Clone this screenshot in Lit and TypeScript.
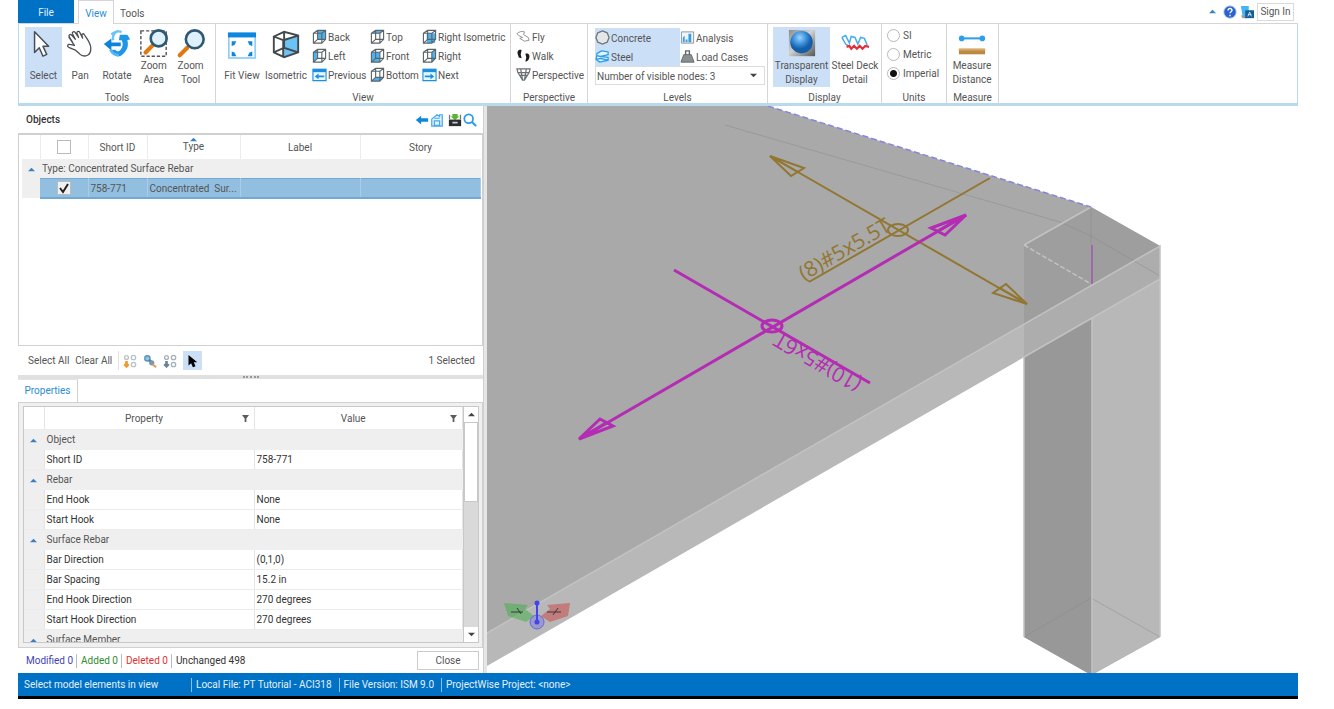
import { LitElement, html, svg, css, nothing, type TemplateResult } from "lit";
import { customElement, property, state } from "lit/decorators.js";
import { classMap } from "lit/directives/class-map.js";

/* ---------- icons ---------- */

const cubeEdges = svg`<path d="M1.500 4.500 6 1.500h8.500v9.500l-4 4H1.500zM1.500 4.500h9v10.500M10.500 4.500l4-3M6 1.500v9.500M6 11h8.500M1.500 15 6 11" fill="none" stroke="#5d6468" stroke-width="1.200"/>`;

const cubeFace: Record<string, string> = {
  back: "M6 1.500h8.500V11H6z",
  left: "M1.500 4.500 6 1.500V11l-4.500 4z",
  top: "M1.500 4.500 6 1.500h8.500l-4 3z",
  front: "M1.500 4.500h9V15h-9z",
  bottom: "M1.500 15 6 11h8.500l-4 4z",
  right: "M10.500 4.500l4-3V11l-4 4z",
};

function cube(face: string) {
  return html`<svg viewBox="0 0 16 16" aria-hidden="true">
    <path d=${cubeFace[face]} fill="#4bb4f2" />${cubeEdges}
  </svg>`;
}

const icons: Record<string, TemplateResult> = {
  select: html`<svg viewBox="0 0 32 32" aria-hidden="true"><path d="M7 3v22l5-5 4 9 4-2-4-8.500h6z" fill="#fff" stroke="#4a4f55" stroke-width="1.600" stroke-linejoin="round"/></svg>`,
  pan: html`<svg viewBox="0 0 32 32" aria-hidden="true"><path d="M8 14 4.500 8.500c-1-2 1.200-3.600 2.600-1.900L11 11 8 5c-.8-2 1.700-3 2.800-1.300L14.500 9l-1.700-4.500c-.5-2 2.100-2.700 3-.8l3 6-.8-3c-.3-1.800 1.800-2.300 2.700-.6 2.300 4 6.500 8.500 6.800 13.900.2 4-.5 6.500-3.500 8-3 1.400-6 1-8.500-1.500l-4.500-4-7-3c-2.300-1.200-1-3.700 1.200-3l4.800 1-6-9" fill="#fff" stroke="#4a4f55" stroke-width="1.400" stroke-linejoin="round"/></svg>`,
  rotate: html`<svg viewBox="0 0 32 32" aria-hidden="true"><path d="M17 2c-4 2-6 6-5 10M10 6c3-3 7-4 11-3" fill="none" stroke="#6cc3f7" stroke-width="2.500"/><path d="M10 10 2 16l8 7v-4.500h10v-4H10z" fill="#0c84dc"/><path d="M19 6h8l3 5-3 1c2 7-1 12-6 16-3 2-7 1-10-3l-2-3h5c2 2 4 2 5 1 3-3 4-7 2-11h-3z" fill="#1f97e8"/><path d="M9 22c2 4 5 6 9 6" fill="none" stroke="#52b7f5" stroke-width="3"/></svg>`,
  zoomArea: html`<svg viewBox="0 0 32 32" aria-hidden="true"><path d="M2 2h27v27H2z" fill="none" stroke="#50545a" stroke-width="1.500" stroke-dasharray="3.500 2"/><path d="m14 18-7 7" stroke="#e0790f" stroke-width="4.500" stroke-linecap="round"/><circle cx="21" cy="10" r="8.500" fill="#dff1fc" stroke="#2f5872" stroke-width="2.800"/></svg>`,
  zoomTool: html`<svg viewBox="0 0 32 32" aria-hidden="true"><path d="m12 20-8 8" stroke="#e0790f" stroke-width="4.500" stroke-linecap="round"/><circle cx="20" cy="11" r="9.500" fill="#dff1fc" stroke="#2f5872" stroke-width="2.800"/></svg>`,
  fit: html`<svg viewBox="0 0 32 32" aria-hidden="true"><path d="M2 4h28v27H2z" fill="#fff" stroke="#7cc6f5" stroke-width="1.500"/><path d="M1 4h30v5H1z" fill="#0f86de"/><path d="M5 13h5l-2 4-3 1zM27 13v5l-3-1-2-4zM5 29v-5l3 1 2 4zM27 29h-5l2-4 3-1z" fill="#0f86de"/></svg>`,
  isometric: html`<svg viewBox="0 0 32 32" aria-hidden="true"><path d="M13 11l16-3v17l-16 5z" fill="#6cc3f5"/><path d="M3 8 14 3l15 4v18l-15 5L3 25zM3 8l10 4v18M13 12l16-5M14 3v17M3 25l11-5 15 5" fill="none" stroke="#43484c" stroke-width="2"/></svg>`,
  prev: html`<svg viewBox="0 0 16 16" aria-hidden="true"><path d="M1 2.500h14v12H1z" fill="#e8f6fe" stroke="#1b8fe4" stroke-width="1.200"/><path d="M1 2h14v3.500H1z" fill="#1b8fe4"/><path d="M3 10l4-3v2h6v2H7v2z" fill="#1b8fe4"/></svg>`,
  next: html`<svg viewBox="0 0 16 16" aria-hidden="true"><path d="M1 2.500h14v12H1z" fill="#e8f6fe" stroke="#1b8fe4" stroke-width="1.200"/><path d="M1 2h14v3.500H1z" fill="#1b8fe4"/><path d="M13 10 9 7v2H3v2h6v2z" fill="#1b8fe4"/></svg>`,
  fly: html`<svg viewBox="0 0 16 16" aria-hidden="true"><path d="M1 5c2-2 5-3 8-2l-1 3 5 3 1 3-5 1-5-3 3-1-4-2z" fill="#fff" stroke="#8b9094"/></svg>`,
  walk: html`<svg viewBox="0 0 16 16" aria-hidden="true"><path d="M6 2C2 1 1 4 2 7l1 3 3 1-1-4z" fill="#1b1b1b"/><path d="M10 6c4-1 5 2 4 5s-3 4-4 3l1-4z" fill="#1b1b1b"/></svg>`,
  perspective: html`<svg viewBox="0 0 16 16" aria-hidden="true"><path d="M1 2h14l-1 4-5 8H7L2 6zM5 2l2 12M11 2 9 14M2 6h12M4 9h8" fill="none" stroke="#6b7075" stroke-width="1.300"/></svg>`,
  concrete: html`<svg viewBox="0 0 16 16" aria-hidden="true"><path d="M8 1l5 2 2 5-2 5-5 2-5-2-2-5 2-5z" fill="#e4e6e8" stroke="#70767b" stroke-width="1.400"/></svg>`,
  steel: html`<svg viewBox="0 0 16 16" aria-hidden="true"><path d="M14 3 7 2 2 5v2l4 1 8-2zM2 7l-1 4 4 3 9-2V9L6 8M1 11l5-1 8 2" fill="#e4f4fe" stroke="#2f9fe8" stroke-width="1.400" stroke-linejoin="round"/></svg>`,
  analysis: html`<svg viewBox="0 0 16 16" aria-hidden="true"><path d="M1.500 2h13v12h-13z" fill="#eef6fb" stroke="#8b9298"/><path d="M3 13V8l2-2v7zM6 13v-3h2v3zM9 13V4h3v9z" fill="#3a9be0"/></svg>`,
  load: html`<svg viewBox="0 0 16 16" aria-hidden="true"><path d="M4 6h8l3 8H1z" fill="#8a8f93" stroke="#60666a"/><path d="M6 6V2h4v4" fill="none" stroke="#60666a" stroke-width="1.500"/></svg>`,
  transparent: html`<svg viewBox="0 0 32 32" aria-hidden="true"><defs><linearGradient id="plate" x2="1" y2="1"><stop stop-color="#8c8c8c"/><stop offset=".45" stop-color="#d2d2d2"/><stop offset="1" stop-color="#555"/></linearGradient><radialGradient id="ball" cx=".42" cy=".3"><stop stop-color="#9fd4fb"/><stop offset=".6" stop-color="#3a8fdb"/><stop offset="1" stop-color="#155fa8"/></radialGradient></defs><path d="M2 1h28v28H2z" fill="url(#plate)"/><circle cx="15.500" cy="14" r="12" fill="url(#ball)"/></svg>`,
  deck: html`<svg viewBox="0 0 32 32" aria-hidden="true"><path d="M2 9l4-2 4 8 2-7 4 1 3 7 3-7 4 1 3 7M2 9l4 7 3 2" fill="none" stroke="#45abec" stroke-width="1.600"/><path d="M7 19l3-1 2 3 3-3 3 3 3-3 3 3 3-3 4 1" fill="none" stroke="#e0303a" stroke-width="2.400"/></svg>`,
  measure: html`<svg viewBox="0 0 32 32" aria-hidden="true"><path d="M4 10h24" stroke="#2f9fe8" stroke-width="2.200"/><circle cx="5" cy="10" r="3" fill="#2f9fe8"/><circle cx="27" cy="10" r="3" fill="#2f9fe8"/><path d="M2 21h28v6H2z" fill="#bb8844"/><path d="M2 21h28v2H2z" fill="#d5aa66"/></svg>`,
  help: html`<svg viewBox="0 0 16 16" aria-hidden="true"><circle cx="8" cy="8" r="7" fill="#2b62cc" stroke="#9db8e8"/><path d="M5.800 6.300c0-3 4.500-3 4.500-.3 0 1.700-2.200 1.600-2.200 3.500M8 11v1.800" fill="none" stroke="#fff" stroke-width="1.600"/></svg>`,
  bentley: html`<svg viewBox="0 0 16 16" aria-hidden="true"><path d="M1 1h9v12H3z" fill="#45b5f0"/><path d="M1 12h7v3H3z" fill="#9a9a9a"/><path d="M6 6h10v9H6z" fill="#115f98"/><path d="M9 13l2-5 2 5M9 11h4" stroke="#d6ecfa" fill="none"/></svg>`,
  back: html`<svg viewBox="0 0 16 16" aria-hidden="true"><path d="M1 8l6-5v3h8v4H7v3z" fill="#0f86de"/></svg>`,
  home: html`<svg viewBox="0 0 16 16" aria-hidden="true"><path d="M2 7l6-5 3 2V2h3v13H2zM5 9h6v5H5zM5 6h6" fill="#e3f3fd" stroke="#45a9ea" stroke-width="1.400"/></svg>`,
  drawer: html`<svg viewBox="0 0 16 16" aria-hidden="true"><path d="M1 2h1.500v5H1zM13.500 2H15v5h-1.500z" fill="#777"/><path d="M5 1h6v3h2L8 8 3 4h2z" fill="#58b52c"/><path d="M1 7.500h14V15H1z" fill="#2a2e31"/><path d="M5 10h6v2H5z" fill="#c6cacc"/></svg>`,
  search: html`<svg viewBox="0 0 16 16" aria-hidden="true"><circle cx="6.500" cy="6.500" r="5" fill="none" stroke="#2b9be8" stroke-width="2"/><path d="m10 10 5 5" stroke="#2b9be8" stroke-width="2.400"/></svg>`,
  pickAdd: html`<svg viewBox="0 0 16 16" aria-hidden="true"><path d="M4 8v5M1.500 11.500 4 14l2.500-2.500" fill="none" stroke="#f09a28" stroke-width="3"/><circle cx="4" cy="4" r="2.200" fill="none" stroke="#b8c3c9" stroke-width="1.500"/><circle cx="12" cy="4" r="2.500" fill="none" stroke="#b8c3c9" stroke-width="1.500"/><circle cx="12" cy="12" r="2.500" fill="none" stroke="#b8c3c9" stroke-width="1.500"/></svg>`,
  pickFind: html`<svg viewBox="0 0 16 16" aria-hidden="true"><circle cx="5" cy="5" r="3" fill="#8cc7ea" stroke="#5a92b4" stroke-width="1.500"/><path d="m7 7 4 3" stroke="#567c92" stroke-width="3"/><circle cx="10" cy="10" r="3" fill="#7e99a8"/><path d="m11 12 4 3" stroke="#dda04c" stroke-width="2.200"/></svg>`,
  pickDrop: html`<svg viewBox="0 0 16 16" aria-hidden="true"><path d="M4 8v5M1.500 11.500 4 14l2.500-2.500" fill="none" stroke="#6c8494" stroke-width="3"/><circle cx="4" cy="4" r="2.200" fill="none" stroke="#a5b1b8" stroke-width="1.500"/><circle cx="12" cy="4" r="2.500" fill="none" stroke="#a5b1b8" stroke-width="1.500"/><circle cx="12" cy="12" r="2.500" fill="none" stroke="#a5b1b8" stroke-width="1.500"/></svg>`,
  pointer: html`<svg viewBox="0 0 16 16" aria-hidden="true"><path d="M4 1v12l3-2.500L9 15l3-1-2-4.500h4z" fill="#000"/></svg>`,
  filter: html`<svg viewBox="0 0 8 8" aria-hidden="true"><path d="M0 0h8L5 4v4H3V4z" fill="#5c5c5c"/></svg>`,
  up: html`<svg viewBox="0 0 8 8" aria-hidden="true"><path d="M0 6l4-4 4 4z" fill="#3c7fbf"/></svg>`,
  scrollUp: html`<svg viewBox="0 0 8 8" aria-hidden="true"><path d="M0 6l4-4 4 4z" fill="#444"/></svg>`,
  scrollDown: html`<svg viewBox="0 0 8 8" aria-hidden="true"><path d="M0 2l4 4 4-4z" fill="#444"/></svg>`,
};

for (const face of Object.keys(cubeFace)) icons["cube-" + face] = cube(face);
icons["cube-iso"] = html`<svg viewBox="0 0 16 16" aria-hidden="true"><path d="M5 4.500h9V15H5z" fill="#4bb4f2"/>${cubeEdges}</svg>`;

const controlReset = css`
  *, *::before, *::after { box-sizing: border-box; }
  button, select, input { font: inherit; color: inherit; margin: 0; }
  button { border: 0; background: none; padding: 0; white-space: nowrap; }
  svg { display: block; }
`;

/* ---------- ribbon ---------- */

@customElement("ribbon-bar")
export class RibbonBar extends LitElement {
  @state() private units = "Imperial";

  static styles = [controlReset, css`
    :host { display: block; color: #555; }
    .tabs { display: flex; align-items: stretch; height: 24px; border-bottom: 1px solid #d5d5d5; }
    .file { width: 56px; padding-top: 2px; background: #0072c6; color: #e4f0fa; }
    .tab { padding: 3px 6px 0; height: 24px; }
    .tab.active { margin-left: 4px; width: 36px; padding: 2px 0 0; color: #2a8dd4; background: #fff; border: 1px solid #d5d5d5; border-bottom: 0; }
    .account { margin-left: auto; display: flex; align-items: center; gap: 3px; padding-right: 4px; }
    .account svg { width: 14px; height: 14px; }
    .account .fold svg { width: 7px; height: 7px; margin-right: 4px; }
    .signin { border: 1px solid #dadada; height: 18px; width: 37px; }
    .groups { display: flex; height: 82px; border: 1px solid #b9d9ee; border-top: 0; border-bottom-width: 3px; }
    .group { display: flex; flex-direction: column; flex: none; border-right: 1px solid #d5d5d5; }
    .body { display: flex; height: 64px; padding: 3px 6px 0; }
    .caption { text-align: center; line-height: 20px; height: 15px; }
    .big { display: flex; flex-direction: column; align-items: center; width: 38px; height: 60px; line-height: 14px; white-space: normal; }
    .big svg { width: 30px; height: 30px; margin-top: 2px; flex: none; }
    .big .text { height: 28px; display: flex; align-items: center; text-align: center; }
    .big .single { padding-top: 6px; white-space: nowrap; }
    .wide { width: 44px; }
    .display { width: 57px; }
    .deck { width: 50px; }
    .on { background: #cbe0f7; }
    .stack { display: grid; grid-auto-rows: 19px; grid-auto-flow: column; grid-template-rows: repeat(3, 19px); align-content: start; }
    .small { display: flex; align-items: center; gap: 1px; height: 19px; text-align: left; }
    .small span { padding-top: 2px; }
    .small svg { width: 15px; height: 15px; flex: none; }
    .tools { width: 197px; }
    .view { width: 295px; }
    .view .body { padding: 3px 4px 0; }
    .view .stack { grid-template-columns: 58px 52px auto; margin-left: 4px; }
    .walk { width: 77px; }
    .walk .body { padding: 3px 5px 0; }
    .levels { width: 180px; }
    .levels .body { flex-direction: column; padding: 4px 2px 0 7px; }
    .pairs { display: grid; grid-template-columns: 85px auto; grid-auto-rows: 19px; }
    .combo { position: relative; display: block; height: 19px; }
    .combo select { width: 100%; height: 19px; appearance: none; background: #fff; border: 1px solid #dcdcdc; padding: 2px 1px 0; }
    .combo svg { position: absolute; right: 8px; top: 6px; width: 7px; height: 7px; pointer-events: none; }
    .show { width: 114px; }
    .show .body { padding: 3px 1px 0 5px; }
    .unit { display: flex; align-items: center; gap: 3px; height: 19px; }
    .unit input { appearance: none; width: 13px; height: 13px; border: 1px solid #b8b8b8; border-radius: 50%; background: #fff; }
    .unit input:checked { background: radial-gradient(circle, #111 0 3px, #fff 4px); }
    .units { width: 65px; }
    .units .body { display: block; padding: 2px 5px; }
    .measure { width: 52px; }
    .measure .body { padding: 3px 3px 0; }
  `];

  private big(icon: string, label: string, extra = "", single = false) {
    return html`<button class="big ${extra}">${icons[icon]}<span class=${classMap({ text: true, single })}>${label}</span></button>`;
  }

  private small(icon: string, label: string, on = false) {
    return html`<button class=${classMap({ small: true, on })}>${icons[icon]}<span>${label}</span></button>`;
  }

  render() {
    return html`
      <nav class="tabs">
        <button class="file">File</button>
        <button class="tab active">View</button>
        <button class="tab">Tools</button>
        <div class="account">
          <button class="fold" aria-label="Collapse ribbon">${icons.up}</button>
          <button aria-label="Help">${icons.help}</button>
          <button aria-label="Connect">${icons.bentley}</button>
          <button class="signin">Sign In</button>
        </div>
      </nav>
      <div class="groups">
        <section class="group tools">
          <div class="body">
            ${this.big("select", "Select", "on", true)}
            ${this.big("pan", "Pan", "", true)}
            ${this.big("rotate", "Rotate", "", true)}
            ${this.big("zoomArea", "Zoom Area")}
            ${this.big("zoomTool", "Zoom Tool")}
          </div>
          <div class="caption">Tools</div>
        </section>
        <section class="group view">
          <div class="body">
            ${this.big("fit", "Fit View", "wide", true)}
            ${this.big("isometric", "Isometric", "wide", true)}
            <div class="stack">
              ${this.small("cube-back", "Back")}${this.small("cube-left", "Left")}${this.small("prev", "Previous")}
              ${this.small("cube-top", "Top")}${this.small("cube-front", "Front")}${this.small("cube-bottom", "Bottom")}
              ${this.small("cube-iso", "Right Isometric")}${this.small("cube-right", "Right")}${this.small("next", "Next")}
            </div>
          </div>
          <div class="caption">View</div>
        </section>
        <section class="group walk">
          <div class="body">
            <div class="stack">
              ${this.small("fly", "Fly")}${this.small("walk", "Walk")}${this.small("perspective", "Perspective")}
            </div>
          </div>
          <div class="caption">Perspective</div>
        </section>
        <section class="group levels">
          <div class="body">
            <div class="pairs">
              ${this.small("concrete", "Concrete", true)}${this.small("analysis", "Analysis")}
              ${this.small("steel", "Steel", true)}${this.small("load", "Load Cases")}
            </div>
            <label class="combo">
              <select aria-label="Visible nodes"><option>Number of visible nodes: 3</option></select>
              ${icons.scrollDown}
            </label>
          </div>
          <div class="caption">Levels</div>
        </section>
        <section class="group show">
          <div class="body">
            ${this.big("transparent", "Transparent Display", "display on")}
            ${this.big("deck", "Steel Deck Detail", "deck")}
          </div>
          <div class="caption">Display</div>
        </section>
        <section class="group units">
          <div class="body">
            ${["SI", "Metric", "Imperial"].map((u) => html`
              <label class="unit"><input type="radio" name="units" .checked=${this.units === u} @change=${() => (this.units = u)} />${u}</label>`)}
          </div>
          <div class="caption">Units</div>
        </section>
        <section class="group measure">
          <div class="body">${this.big("measure", "Measure Distance", "wide")}</div>
          <div class="caption">Measure</div>
        </section>
      </div>`;
  }
}

/* ---------- objects list ---------- */

@customElement("objects-panel")
export class ObjectsPanel extends LitElement {
  static styles = [controlReset, css`
    :host { display: flex; flex-direction: column; color: #555; }
    .title { display: flex; align-items: center; height: 27px; padding: 0 6px 0 8px; }
    h2 { font-size: 10px; font-weight: 500; margin: 0 auto 0 0; color: #333; }
    .title button { margin-left: 1px; }
    .title svg { width: 14px; height: 14px; }
    .title .apart { margin-left: 4px; }
    .frame { flex: 1; border: 1px solid #d0d0d0; border-top-width: 2px; padding: 0 1px 0 3px; }
    table { width: 100%; border-collapse: collapse; table-layout: fixed; }
    th, td { padding: 2px 2px 0; font-weight: 400; white-space: nowrap; overflow: hidden; text-overflow: ellipsis; }
    th { height: 24px; border-right: 1px solid #ececec; }
    th:last-child { border-right: 0; }
    td { height: 20px; }
    .group td { background: #efefef; height: 19px; }
    .group td svg, .sort svg { width: 7px; height: 7px; margin: auto; }
    .picked td { background: #92bfe0; border-top: 1px solid #6fa9d6; border-bottom: 2px solid #6fa9d6; border-right: 1px solid #a9cde8; }
    .picked td:first-child { background: #efefef; border: 0; }
    td.center { text-align: center; padding-top: 0; }
    .sort { line-height: 12px; padding-bottom: 5px; }
    .sort svg { margin-bottom: -2px; }
    input { display: block; margin: 0 auto; appearance: none; width: 14px; height: 14px; border: 1px solid #bbb; background: #fff; }
    input:checked { background: #f0f0f0 url("data:image/svg+xml,%3Csvg xmlns='http://www.w3.org/2000/svg' viewBox='0 0 12 12'%3E%3Cpath d='M2 6l3 4 5-8' fill='none' stroke='%23222' stroke-width='2'/%3E%3C/svg%3E"); }
    .indent { width: 18px; }
    .check { width: 48px; padding-top: 0; }
    .id { width: 59px; }
    .type { width: 93px; padding-top: 0; }
    .label { width: 120px; }
    .tools { display: flex; align-items: center; height: 29px; padding: 0 8px 0 10px; }
    .tools button + button { margin-left: 6px; }
    .tools svg { width: 14px; height: 14px; }
    .tools .sep { border-left: 1px solid #e2e2e2; padding-left: 4px; height: 19px; }
    .tools .on { background: #cbe0f7; width: 19px; height: 19px; padding: 0 2px; }
    .count { margin-left: auto; }
  `];

  render() {
    return html`
      <header class="title">
        <h2>Objects</h2>
        <button aria-label="Back">${icons.back}</button>
        <button aria-label="Home">${icons.home}</button>
        <button class="apart" aria-label="Saved sets">${icons.drawer}</button>
        <button aria-label="Search">${icons.search}</button>
      </header>
      <div class="frame">
        <table>
          <thead>
            <tr>
              <th class="indent"></th>
              <th class="check"><input type="checkbox" aria-label="Select all rows" /></th>
              <th class="id">Short ID</th>
              <th class="type"><div class="sort">${icons.up}Type</div></th>
              <th class="label">Label</th>
              <th>Story</th>
            </tr>
          </thead>
          <tbody>
            <tr class="group"><td>${icons.up}</td><td colspan="5">Type: Concentrated Surface Rebar</td></tr>
            <tr class="picked">
              <td></td>
              <td class="center"><input type="checkbox" aria-label="758-771" checked /></td>
              <td>758-771</td><td>Concentrated &nbsp;Sur...</td><td></td><td></td>
            </tr>
          </tbody>
        </table>
      </div>
      <footer class="tools">
        <button>Select All</button>
        <button>Clear All</button>
        <button class="sep" aria-label="Add to selection">${icons.pickAdd}</button>
        <button aria-label="Find selection">${icons.pickFind}</button>
        <button aria-label="Remove from selection">${icons.pickDrop}</button>
        <button class="on" aria-label="Pick in view">${icons.pointer}</button>
        <span class="count">1 Selected</span>
      </footer>`;
  }
}

/* ---------- properties grid ---------- */

type Row = [string, string?];
const rows: Row[] = [
  ["Object"], ["Short ID", "758-771"],
  ["Rebar"], ["End Hook", "None"], ["Start Hook", "None"],
  ["Surface Rebar"], ["Bar Direction", "(0,1,0)"], ["Bar Spacing", "15.2 in"],
  ["End Hook Direction", "270 degrees"], ["Start Hook Direction", "270 degrees"],
  ["Surface Member"],
];

@customElement("properties-panel")
export class PropertiesPanel extends LitElement {
  static styles = [controlReset, css`
    :host { display: flex; flex-direction: column; color: #333; min-height: 0; }
    .tab { width: 60px; height: 23px; color: #2a8dd4; background: #fff; border-right: 1px solid #d0d0d0; border-top: 1px solid #e4e4e4; }
    .frame { flex: 1; min-height: 0; display: flex; background: #f0f0f0; border: 1px solid #d0d0d0; padding: 3px 3px 4px 4px; }
    .clip { flex: 1; overflow: hidden; border: 1px solid #c8c8c8; border-right: 0; background: #fff; }
    table { width: 100%; border-collapse: collapse; table-layout: fixed; }
    th, td { height: 20px; padding: 2px 2px 0; font-weight: 400; text-align: left; border-bottom: 1px solid #ececec; border-right: 1px solid #e4e4e4; white-space: nowrap; }
    th { height: 22px; color: #555; }
    .head { display: flex; align-items: center; padding-right: 3px; }
    .head span { flex: 1; text-align: center; }
    .head svg { width: 7px; height: 7px; }
    .indent { width: 20px; background: #efefef; }
    th.indent { background: #fff; }
    .indent svg { width: 7px; height: 7px; margin: auto; }
    .group td { background: #efefef; border-color: #efefef; color: #555; }
    .name { width: 210px; }
    .bar { width: 16px; display: flex; flex-direction: column; background: #d9d9d9; border: 1px solid #c8c8c8; }
    .bar button { height: 15px; display: grid; place-items: center; background: #fff; }
    .bar svg { width: 7px; height: 7px; }
    .thumb { height: 80px; background: #fff; border: 1px solid #c8c8c8; margin-bottom: auto; }
    .foot { display: flex; align-items: center; height: 25px; padding: 0 4px 0 8px; }
    .foot span + span { border-left: 1px solid #bbb; margin-left: 3px; padding-left: 4px; }
    .modified { color: #3f3fb8; }
    .added { color: #2e8b2e; }
    .deleted { color: #e03030; }
    .close { margin-left: auto; width: 62px; height: 19px; border: 1px solid #ccc; background: #fff; color: #555; }
  `];

  render() {
    return html`
      <button class="tab">Properties</button>
      <div class="frame">
        <div class="clip">
          <table>
            <thead><tr>
              <th class="indent"></th>
              <th class="name"><div class="head"><span>Property</span>${icons.filter}</div></th>
              <th><div class="head"><span>Value</span>${icons.filter}</div></th>
            </tr></thead>
            <tbody>
              ${rows.map(([name, value]) => value === undefined
                ? html`<tr class="group"><td class="indent">${icons.up}</td><td colspan="2">${name}</td></tr>`
                : html`<tr><td class="indent">${nothing}</td><td>${name}</td><td>${value}</td></tr>`)}
            </tbody>
          </table>
        </div>
        <div class="bar">
          <button aria-label="Scroll up">${icons.scrollUp}</button>
          <div class="thumb"></div>
          <button aria-label="Scroll down">${icons.scrollDown}</button>
        </div>
      </div>
      <footer class="foot">
        <span class="modified">Modified 0</span><span class="added">Added 0</span>
        <span class="deleted">Deleted 0</span><span>Unchanged 498</span>
        <button class="close">Close</button>
      </footer>`;
  }
}

/* ---------- model view ---------- */

@customElement("model-view")
export class ModelView extends LitElement {
  @property() label = "Structural model";

  static styles = css`
    :host { display: block; overflow: hidden; background: #fff; }
    svg { display: block; width: 100%; height: 100%; }
    .edge { fill: none; stroke: #c2c2c2; stroke-width: 1.500; }
    .faint { fill: none; stroke: #888; stroke-width: 1; opacity: .45; }
    .gold { fill: none; stroke: #927631; stroke-width: 2; }
    .pink { fill: none; stroke: #b42cb4; stroke-width: 3; }
    .note { font-family: "Open Sans", sans-serif; font-size: 21px; }
    .goldtext { fill: #927631; }
    .pinktext { fill: #b42cb4; }
  `;

  render() {
    return html`<svg viewBox="487 106 811 567" preserveAspectRatio="xMinYMin slice" role="img" aria-label=${this.label}>
      <path d="M487 106H768L1091 207 1160 246 487 633z" fill="#a9a9a9"/>
      <path d="M1024 245 1091 207 1160 246V637L1091 675 1024 637z" fill="#9e9e9e"/>
      <path d="M1024 352 1092 316V675L1024 637z" fill="#989898"/>
      <path d="M1092 316 1160 277V637L1092 675z" fill="#b8b8b8"/>
      <path d="M487 633 1160 246V279L487 666z" fill="#b8b8b8"/>
      <path d="M1024 324 1160 246V279L1024 357z" fill="#adadad"/>
      <path class="faint" d="M725 125 1060 222 1091 236 1160 276M1024 637 1091 598 1160 637M1091 207V245"/>
      <path class="edge" d="M487 633 1160 246V637M1024 357 1160 279M1091 207 1024 245M1092 318V675M1024 357V637"/>
      <path class="edge" d="M1024 245 1091 284" stroke-dasharray="5 2"/>
      <path d="M768 106 1091 207" stroke="#8585dd" stroke-width="1.500" stroke-dasharray="6 3"/>
      <path d="M1092 245V284" stroke="#9b6aa8" stroke-width="2"/>

      <g class="gold">
        <path d="M770 156 1027 304M990 178 809 282"/>
        <path d="M770 156 804 168 791 176zM770 156 798 172M1027 304 1006 284 993 293zM1027 304 1000 288"/>
        <ellipse cx="898" cy="230" rx="10" ry="6"/>
      </g>
      <text class="note goldtext" transform="translate(804 281) rotate(-30)">(8)#5x5.5T</text>

      <g class="pink">
        <path d="M581 438 966 215M674 270 870 383"/>
        <path d="M579 439 600 419 613 426zM579 439 606 423M966 215 931 228 945 235zM966 215 938 231"/>
        <ellipse cx="772" cy="326" rx="10" ry="6"/>
      </g>
      <text class="note pinktext" transform="translate(863 380) rotate(210)">(10)#5x6T</text>

      <path d="M504 603 528 605 525 609 534 616 526 622 508 616z" fill="#45b14c" opacity=".55"/>
      <path d="M570 603 547 605 550 609 541 616 550 622 568 616z" fill="#cc4040" opacity=".5"/>
      <path d="M511 612h12M517 608l4 6M547 612h14M553 615l5-7" stroke="#3a3a3a" fill="none"/>
      <circle cx="537" cy="622" r="7" fill="#5e5ef0" fill-opacity=".35" stroke="#6a6ae0"/>
      <path d="M537 603v19" stroke="#4444ee" stroke-width="2"/>
      <circle cx="537" cy="603" r="2.500" fill="#4444ee"/><circle cx="537" cy="622" r="2.500" fill="#4444ee"/>
    </svg>`;
  }
}

/* ---------- window ---------- */

@customElement("app-root")
export class AppRoot extends LitElement {
  static styles = [controlReset, css`
    :host { display: flex; flex-direction: column; box-sizing: border-box; height: 100vh; padding: 0 36px 10px 18px; background: #fff; font: 10px/14px Roboto, "Noto Sans", sans-serif; overflow: hidden; }
    ribbon-bar { flex: none; }
    main { flex: 1; min-height: 0; display: grid; grid-template-columns: 465px 4px 1fr; }
    .side { display: flex; flex-direction: column; min-height: 0; }
    objects-panel { flex: 269 1 0; }
    .split { height: 4px; background: #e0e0e0; display: flex; justify-content: center; align-items: center; }
    .split::after { content: ""; width: 16px; border-top: 2px dotted #999; }
    properties-panel { flex: 294 1 0; }
    .gutter { background: #e6e6e6; border-left: 1px solid #d0d0d0; }
    model-view { min-width: 0; min-height: 0; }
    .status { display: flex; align-items: center; height: 26px; padding: 0 6px; background: #0072c6; color: #e4f0fa; border-bottom: 3px solid #000; }
    .status span + span { border-left: 1px solid #8dc0e6; padding-left: 4px; margin-left: 7px; }
    .status .hint { width: 160px; }
  `];

  render() {
    return html`
      <ribbon-bar></ribbon-bar>
      <main>
        <div class="side">
          <objects-panel></objects-panel>
          <div class="split"></div>
          <properties-panel></properties-panel>
        </div>
        <div class="gutter"></div>
        <model-view></model-view>
      </main>
      <footer class="status">
        <span class="hint">Select model elements in view</span>
        <span>Local File: PT Tutorial - ACI318</span>
        <span>File Version: ISM 9.0</span>
        <span>ProjectWise Project: &lt;none&gt;</span>
      </footer>`;
  }
}
